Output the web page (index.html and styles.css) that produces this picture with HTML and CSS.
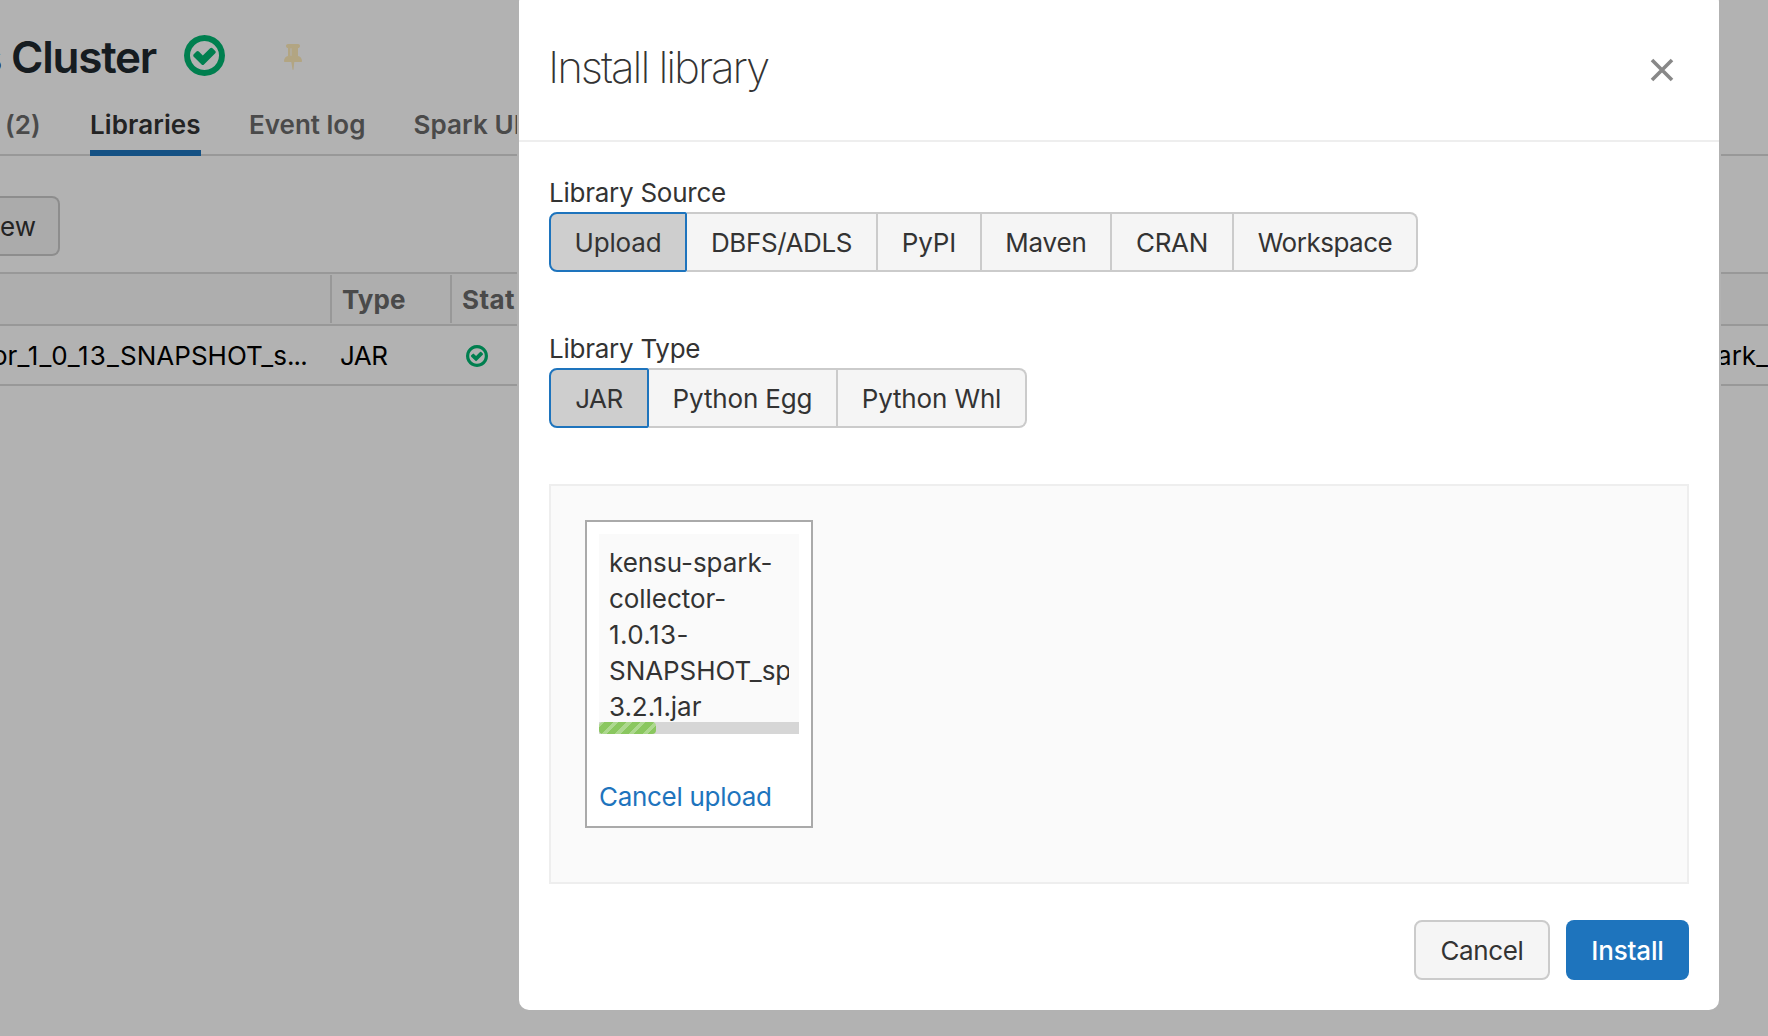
FILE: index.html
```html
<!DOCTYPE html>
<html lang="en">
<head>
<meta charset="utf-8">
<title>Install library</title>
<link rel="stylesheet" href="styles.css">
</head>
<body>
<svg class="defs" width="0" height="0" aria-hidden="true">
  <symbol id="check-circle" viewBox="128 128 1536 1536"><path d="M1299 813l-422 422q-19 19-45 19t-45-19l-294-294q-19-19-19-45t19-45l102-102q19-19 45-19t45 19l147 147 275-275q19-19 45-19t45 19l102 102q19 19 19 45t-19 45zm141 83q0-148-73-273t-198-198-273-73-273 73-198 198-73 273 73 273 198 198 273 73 273-73 198-198 73-273zm224 0q0 209-103 385.500T1281.500 1561 896 1664t-385.500-103T231 1281.500 128 896t103-385.500T510.500 231 896 128t385.500 103T1561 510.500 1664 896z"/></symbol>
</svg>

<div class="page">
  <header class="cluster-header">
    <h1 class="cluster-name">s Cluster</h1>
    <svg class="cluster-status"><use href="#check-circle"/></svg>
    <svg class="pin" viewBox="0 128 1152 1664"><path d="M480 864V416q0-14-9-23t-23-9-23 9-9 23v448q0 14 9 23t23 9 23-9 9-23zm672 352q0 26-19 45t-45 19H659l-51 483q-2 12-10.500 20.500T577 1792h-1q-27 0-32-27l-76-485H64q-26 0-45-19t-19-45q0-123 78.500-221.500T256 896V384q-52 0-90-38t-38-90 38-90 90-38h640q52 0 90 38t38 90-38 90-90 38v512q99 0 177.500 98.500T1152 1216z"/></svg>
  </header>
  <nav class="tabs">
    <a class="tab">(2)</a>
    <a class="tab tab-active">Libraries</a>
    <a class="tab">Event log</a>
    <a class="tab">Spark UI</a>
  </nav>
  <div class="toolbar"><button class="btn btn-new">ew</button></div>
  <div class="table">
    <div class="row row-head">
      <div class="col-name"></div>
      <div class="col-type">Type</div>
      <div class="col-status">Stat</div>
    </div>
    <div class="row">
      <div class="col-name">or<span class="version">_1_0_13_</span>SNAPSHOT_s<span class="dots">...</span></div>
      <div class="col-type">JAR</div>
      <div class="col-status"><svg class="row-status"><use href="#check-circle"/></svg></div>
      <div class="col-source">ark_</div>
    </div>
  </div>
</div>

<div class="backdrop"></div>

<section class="modal" role="dialog" aria-label="Install library">
  <header class="modal-header">
    <h2 class="modal-title">Install library</h2>
    <svg class="close" viewBox="0 0 24 24"><path d="M2 2L22 22M22 2L2 22"/></svg>
  </header>
  <div class="modal-body">
    <div class="field">
      <div class="label">Library Source</div>
      <div class="segments">
        <button class="segment selected w-upload">Upload</button>
        <button class="segment w-dbfs">DBFS/ADLS</button>
        <button class="segment w-pypi">PyPI</button>
        <button class="segment w-maven">Maven</button>
        <button class="segment w-cran">CRAN</button>
        <button class="segment w-workspace">Workspace</button>
      </div>
    </div>
    <div class="field">
      <div class="label">Library Type</div>
      <div class="segments">
        <button class="segment selected w-jar">JAR</button>
        <button class="segment w-egg">Python Egg</button>
        <button class="segment w-whl">Python Whl</button>
      </div>
    </div>
    <div class="dropzone">
      <div class="file-card">
        <div class="file-preview">
          <div class="file-name">kensu-spark-<br>collector-<br><span class="file-version">1.0.13-</span><br>SNAPSHOT_spark-<br>3.2.1.jar</div>
          <div class="progress"><div class="progress-bar" style="width: 28.5%"></div></div>
        </div>
        <a class="cancel-upload">Cancel upload</a>
      </div>
    </div>
  </div>
  <footer class="modal-footer">
    <button class="btn btn-cancel">Cancel</button>
    <button class="btn btn-primary">Install</button>
  </footer>
</section>
</body>
</html>
```
FILE: styles.css
```css
* { box-sizing: border-box; }

body {
  margin: 0;
  width: 1768px;
  height: 1036px;
  overflow: hidden;
  position: relative;
  background: #fff;
  color: #333;
  font: 400 26px/36px Inter, sans-serif;
}

button { font: inherit; color: inherit; margin: 0; padding: 0; }
.defs { position: absolute; }

/* Cluster page behind the dialog */
.page { display: flex; flex-direction: column; overflow: hidden; }

.cluster-header {
  display: flex;
  align-items: flex-start;
  height: 96px;
}
.cluster-name {
  display: flex;
  justify-content: flex-end;
  width: 156px;
  margin: 27px 0 0;
  white-space: nowrap;
  font-size: 44px;
  line-height: 60px;
  font-weight: 600;
  letter-spacing: -1.25px;
  color: #20292f;
}
.cluster-status { width: 41px; height: 41px; margin: 35px 0 0 28px; fill: #00b772; }
.pin { width: 18px; height: 26px; margin: 44px 0 0 58.500px; fill: #ffecba; }

.tabs {
  display: flex;
  gap: 48px;
  height: 60px;
  padding-left: 5px;
  border-bottom: 2px solid #dadada;
}
.tab {
  height: 60px;
  padding-top: 10px;
  line-height: 37px;
  white-space: nowrap;
  font-weight: 600;
  letter-spacing: .1px;
  color: #6b6b6b;
}
.tab-active { width: 111px; border-bottom: 6px solid #1e74bd; color: #333; }
.tab:first-child { width: 37px; }
.tab:nth-child(3) { width: 116.500px; letter-spacing: 0; }

.toolbar { height: 116px; padding-top: 40px; }
.btn { height: 60px; border: 2px solid #cbcbcb; border-radius: 8px; background: #f5f5f5; padding-top: 2px; }
.btn-new { width: 60px; border-left: 0; border-radius: 0 8px 8px 0; padding-right: 26px; text-align: right; }

.table { border-top: 2px solid #dadada; color: #000; }
.row { display: flex; align-items: center; height: 60px; border-bottom: 2px solid #dadada; }
.row-head { height: 50px; padding-top: 1px; align-items: flex-start; background: #fafafa; color: #6b6b6b; font-weight: 700; border-bottom: 0; }
.row-head + .row { border-top: 2px solid #dadada; height: 62px; padding-top: 2px; }
.row-head .col-type, .row-head .col-status { height: 48px; line-height: 49px; border-left: 2px solid #dadada; }
.row-head .col-type { padding-left: 10px; }
.row-head .col-status { padding-left: 10px; letter-spacing: .4px; }
.col-name {
  display: flex;
  justify-content: flex-end;
  flex: 0 0 330px;
  padding-right: 23px;
  white-space: nowrap;
  overflow: hidden;
}
.version { letter-spacing: 1.2px; }
.dots { letter-spacing: -.8px; }
.col-type { width: 120px; padding-left: 10px; letter-spacing: -.5px; }
.row-head .col-type { letter-spacing: .1px; }
.col-status { width: 1269px; padding-left: 16px; }
.row-status { display: block; width: 22px; height: 22px; fill: #00b772; }

.backdrop { position: absolute; inset: 0; background: rgba(0, 0, 0, .3); }

/* Dialog */
.modal {
  position: absolute;
  left: 517px;
  top: -10px;
  width: 1204px;
  height: 1022px;
  border: 2px solid #b2b2b2;
  border-radius: 12px;
  background: #fff;
}
.modal-header {
  display: flex;
  justify-content: space-between;
  height: 150px;
  padding: 45px 45px 0 29px;
  border-bottom: 2px solid #eee;
}
.modal-title {
  margin: 0;
  font-size: 44px;
  line-height: 60px;
  font-weight: 200;
  letter-spacing: -2.1px;
}
.close { width: 24px; height: 24px; margin-top: 21px; fill: none; stroke: #888; stroke-width: 3.6; }

.modal-body { padding: 30px 30px 0; }
.field { height: 156px; }
.label { height: 40px; padding-top: 1px; line-height: 40px; letter-spacing: -.25px; }

.segments { display: flex; }
.segment {
  height: 60px;
  padding-top: 2px;
  border: 2px solid #cbcbcb;
  border-left: 0;
  background: #f5f5f5;
  letter-spacing: -.15px;
}
.segment:last-child { border-radius: 0 8px 8px 0; }
.segment.selected {
  border: 2px solid #1e74bd;
  border-radius: 8px 2px 2px 8px;
  background: #cecece;
}
.w-upload { width: 138px; }
.w-dbfs { width: 191px; letter-spacing: -.4px; }
.w-pypi { width: 104px; }
.w-maven { width: 130px; }
.w-cran { width: 122px; letter-spacing: -.3px; }
.w-workspace { width: 184px; letter-spacing: -.5px; }
.w-jar { width: 100px; letter-spacing: -.5px; }
.w-egg { width: 189px; }
.w-whl { width: 189px; }

.dropzone {
  height: 400px;
  padding: 34px;
  border: 2px solid #eee;
  background: #fafafa;
}
.file-card {
  width: 228px;
  height: 308px;
  padding: 12px;
  border: 2px solid #aaa;
  background: #fff;
}
.file-preview { display: flex; flex-direction: column; width: 200px; height: 200px; background: #fafafa; }
.file-name { height: 188px; margin: 0 10px; padding-top: 11px; overflow: hidden; white-space: nowrap; letter-spacing: -.05px; }
.file-version { letter-spacing: .4px; }
.progress { height: 12px; background: #d6d6d6; }
.progress-bar {
  height: 12px;
  border-radius: 4px;
  background: repeating-linear-gradient(-45deg, #8ac75f 0 6px, #add88f 6px 9.700px);
}
.cancel-upload { display: block; margin-top: 45px; color: #1e74bd; letter-spacing: -.3px; }

.modal-footer { display: flex; justify-content: flex-end; gap: 16px; padding: 36px 30px 0; }
.btn-cancel { width: 136px; letter-spacing: -.35px; }
.btn-primary { width: 123px; border: 0; background: #1e74bd; color: #fff; font-weight: 500; letter-spacing: -.15px; }
```
